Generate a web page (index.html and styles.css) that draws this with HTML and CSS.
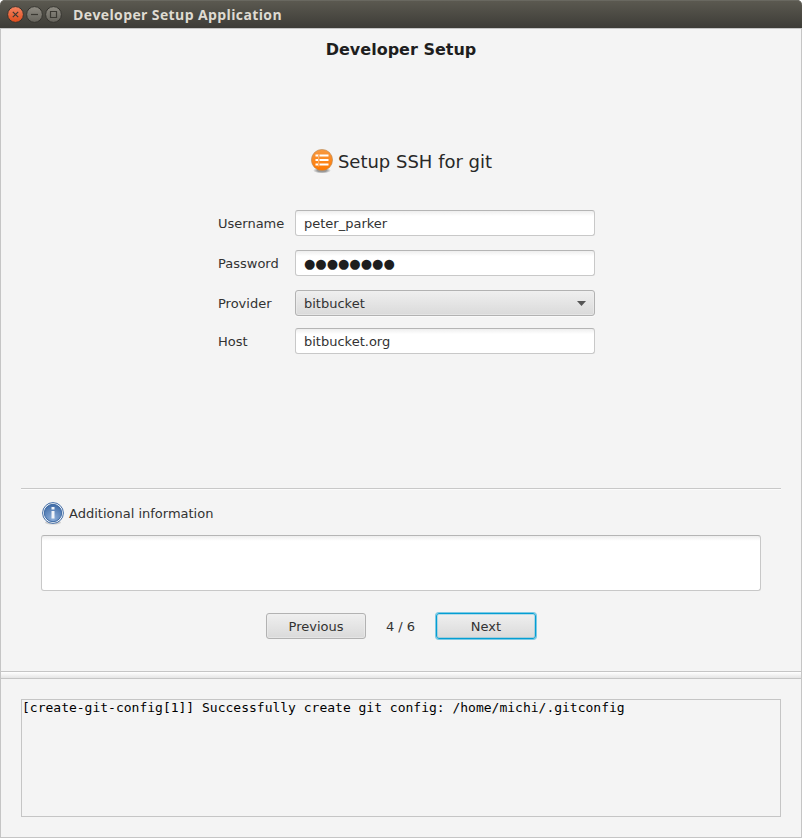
FILE: index.html
```html
<!DOCTYPE html>
<html lang="en">
<head>
<meta charset="utf-8">
<title>Developer Setup Application</title>
<link rel="stylesheet" href="styles.css">
</head>
<body>
<div class="window">
  <header class="titlebar">
    <svg class="controls" width="56" height="20" viewBox="0 0 56 20" aria-hidden="true">
      <defs>
        <linearGradient id="close" x1="0" y1="0" x2="0" y2="1"><stop offset="0" stop-color="#f58462"/><stop offset="1" stop-color="#de4c1b"/></linearGradient>
        <linearGradient id="gray" x1="0" y1="0" x2="0" y2="1"><stop offset="0" stop-color="#8f8c83"/><stop offset="1" stop-color="#65635c"/></linearGradient>
      </defs>
      <g stroke="#35342f" stroke-width="1">
        <circle cx="9.500" cy="10.500" r="7.900" fill="url(#close)"/>
        <circle cx="28.500" cy="10.500" r="7.900" fill="url(#gray)"/>
        <circle cx="47.500" cy="10.500" r="7.900" fill="url(#gray)"/>
      </g>
      <g fill="none" stroke="#3b3933" stroke-width="1.200">
        <path d="M6.800 7.800l5.400 5.400M12.200 7.800l-5.400 5.400"/>
        <path d="M25 10.500h7"/>
        <path d="M44.500 7.500h6v6h-6z"/>
      </g>
    </svg>
    <span class="window-title">Developer Setup Application</span>
  </header>
  <main class="content">
    <section class="setup">
      <h1>Developer Setup</h1>
      <h2>
        <svg width="24" height="25" viewBox="0 0 24 25" aria-hidden="true">
          <defs>
            <linearGradient id="orange" x1="0" y1="0" x2="0" y2="1"><stop offset="0" stop-color="#f79a42"/><stop offset="1" stop-color="#ff7800"/></linearGradient>
            <radialGradient id="shade"><stop offset=".5" stop-color="#999"/><stop offset="1" stop-color="#999" stop-opacity="0"/></radialGradient>
          </defs>
          <ellipse cx="12" cy="21.500" rx="9" ry="3" fill="url(#shade)"/>
          <circle cx="12" cy="11" r="10.600" fill="url(#orange)" stroke="#b98a58" stroke-width=".6"/>
          <path d="M5.500 6.500h2.500M9.500 6.500h9M5.500 11h2.500M9.500 11h9M5.500 15.500h2.500M9.500 15.500h9" stroke="#fff" stroke-width="2"/>
          <path d="M8.600 5v12.500" stroke="#ffe0bd" stroke-width=".5"/>
        </svg>
        <span>Setup SSH for git</span>
      </h2>
      <form class="fields">
        <label>Username</label><div class="field">peter_parker</div>
        <label>Password</label><div class="field"><span class="dots">●●●●●●●●</span></div>
        <label>Provider</label><div class="field select"><span>bitbucket</span><svg width="9" height="5" viewBox="0 0 9 5" aria-hidden="true"><path d="M0 0h9L4.500 5z" fill="#555"/></svg></div>
        <label class="host">Host</label><div class="field host">bitbucket.org</div>
      </form>
    </section>
    <section class="details">
      <div class="info-title">
        <svg width="24" height="24" viewBox="0 0 24 24" aria-hidden="true">
          <defs>
            <radialGradient id="blue" cx=".5" cy=".8" r=".8"><stop offset="0" stop-color="#8fb0da"/><stop offset="1" stop-color="#3f6ba6"/></radialGradient>
          </defs>
          <ellipse cx="12" cy="21.500" rx="8" ry="2" fill="#cfcfcf"/>
          <circle cx="12" cy="12" r="10.400" fill="#fff" stroke="#426ca5" stroke-width="1"/>
          <circle cx="12" cy="12" r="8.700" fill="url(#blue)" stroke="#32619e" stroke-width=".9"/>
          <path d="M10.500 6h3v2.500h-3zM10.500 10h3v7.500h-3z" fill="#f2f5fa"/>
        </svg>
        <span>Additional information</span>
      </div>
      <div class="info-box"></div>
      <nav class="pager">
        <button type="button">Previous</button>
        <span class="page">4 / 6</span>
        <button type="button" class="focused">Next</button>
      </nav>
    </section>
    <div class="splitter"></div>
    <section class="console"><pre>[create-git-config[1]] Successfully create git config: /home/michi/.gitconfig</pre></section>
  </main>
</div>
</body>
</html>
```
FILE: styles.css
```css
* { box-sizing: border-box; }
body {
  margin: 0;
  background: #fff;
  color: #323232;
  font: 13px/18px "DejaVu Sans", sans-serif;
}
svg { display: block; flex: none; }
.window { width: 802px; height: 838px; display: flex; flex-direction: column; overflow: hidden; }
.titlebar {
  height: 28px;
  flex: none;
  display: flex;
  align-items: center;
  padding: 0 0 0 6px;
  border-radius: 5px 5px 0 0;
  background: linear-gradient(#5c5a51, #3d3c37);
  box-shadow: inset 0 1px #696860;
}
.window-title {
  margin-left: 11px;
  color: #dfdbd2;
  font: bold 14px/20px "Open Sans", sans-serif;
  letter-spacing: .39px;
  white-space: nowrap;
  padding-top: 1px;
}
.content {
  flex: 1;
  display: flex;
  flex-direction: column;
  background: #f4f4f4;
  border: 1px solid #c5c5c5;
}
.setup { height: 459px; flex: none; }
h1 {
  margin: 11px 0 0;
  font-size: 16px;
  line-height: 20px;
  text-align: center;
  color: #1e1e1e;
}
h2 {
  margin: 88px 0 0;
  display: flex;
  justify-content: center;
  align-items: center;
  gap: 4px;
  height: 26px;
  font-size: 18px;
  font-weight: normal;
  color: #282828;
}
h2 span { padding-top: 1px; }
.fields {
  width: 377px;
  margin: 36px 0 0 217px;
  display: grid;
  grid-template-columns: 77px 300px;
  grid-template-rows: 26px 26px 26px 26px;
  row-gap: 14px;
  align-items: center;
}
label { padding-top: 2px; }
.field {
  height: 26px;
  display: flex;
  align-items: center;
  padding: 2px 8px 0;
  border: 1px solid #c8c8c8;
  border-top-color: #b5b5b5;
  border-radius: 3px;
  background: linear-gradient(#eee, #fff 5px);
}
.host { position: relative; top: -2px; }
.dots { font-size: 13px; color: #1e1e1e; }
.select {
  justify-content: space-between;
  border-color: #b2b2b2;
  background: linear-gradient(#efefef, #dadada);
  box-shadow: inset 0 0 0 1px #f0f0f080, 0 1px #fafafa;
}
.select svg { margin-bottom: 2px; }
.details {
  height: 183px;
  flex: none;
  margin: 0 20px;
  padding: 12px 20px 0;
  border-top: 1px solid #c8c8c8;
  box-shadow: inset 0 1px #fcfcfc;
}
.info-title { height: 24px; display: flex; align-items: center; gap: 4px; }
.info-title span { padding-top: 2px; }
.info-box {
  height: 56px;
  margin-top: 10px;
  border: 1px solid #c8c8c8;
  border-top-color: #b5b5b5;
  border-radius: 3px;
  background: linear-gradient(#eee, #fff 5px);
}
.pager { margin-top: 22px; display: flex; justify-content: center; align-items: center; }
button {
  width: 100px;
  height: 26px;
  padding: 2px 0 0;
  border: 1px solid #b2b2b2;
  border-radius: 3px;
  background: linear-gradient(#efefef, #dadada);
  box-shadow: inset 0 0 0 1px #f0f0f080;
  color: #323232;
  font: 13px/18px "DejaVu Sans", sans-serif;
}
.page { width: 70px; padding: 2px 1px 0 0; text-align: center; }
.focused { border-color: #039ed3; box-shadow: 0 0 0 1px #039ed380, inset 0 0 0 1px #039ed340; }
.splitter {
  height: 8px;
  flex: none;
  border: 1px solid #c5c5c5;
  border-width: 1px 0;
  background: linear-gradient(#fff, #e5e5e5);
}
.console {
  width: 760px;
  height: 118px;
  margin: 20px 0 0 20px;
  border: 1px solid #c5c5c5;
}
pre { margin: 0; color: #000; font: 13px/15px "DejaVu Sans Mono", monospace; }
```
